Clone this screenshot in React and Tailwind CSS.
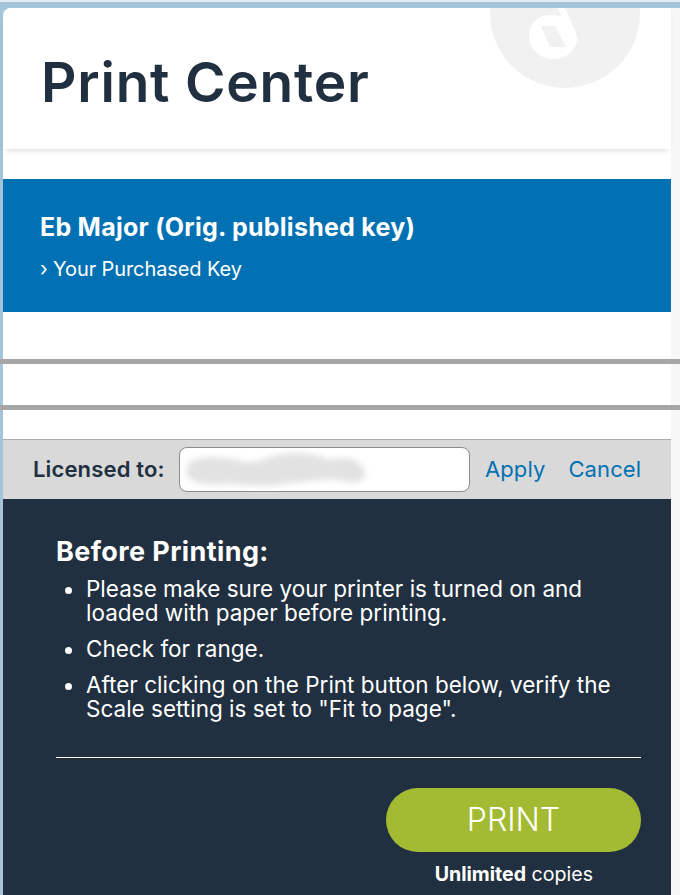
import React from 'react';

const NoteLogo = () => (
    <div className="absolute left-[487px] top-[-70px] w-[150px] h-[150px] rounded-full bg-[#f1f1f1]">
        <svg viewBox="0 0 150 150" className="w-full h-full">
            <path fillRule="evenodd" fill="#ffffff" d="M68 70 L75 70 L86 95 C88 101 87 107 83 112 C78 118 71 121 63 121 C50 121 39 111 39 98 C39 86 48 77 60 77 C64 77 67 77 71 78 Z M51 88 L65 88 L76 109 L60 109 Z" />
        </svg>
    </div>
);

const BlurredName = () => (
    <svg viewBox="0 0 190 45" className="absolute left-[3px] top-0 w-[190px] h-[45px]">
        <defs>
            <filter id="smear" x="-10%" y="-30%" width="120%" height="160%">
                <feGaussianBlur stdDeviation="3" />
            </filter>
        </defs>
        <path filter="url(#smear)" fill="#e2e2e2" d="M5 14 C20 8 40 8 58 13 C72 17 84 9 100 6 C118 3 135 7 148 12 C162 6 178 12 182 23 C183 34 172 37 158 32 C140 30 120 34 100 36 C80 40 60 36 45 36 C25 38 6 35 4 26 Z" />
    </svg>
);

const tips = [
    'Please make sure your printer is turned on and loaded with paper before printing.',
    'Check for range.',
    'After clicking on the Print button below, verify the Scale setting is set to "Fit to page".',
];

export default function App() {
    return (
        <div className="h-[895px] overflow-hidden bg-[#f7f7f7] font-['Inter',sans-serif]">
            <div className="h-[2px] bg-[#e4edf3]"></div>
            <div className="h-[6px] bg-[#a3c4d9]"></div>
            <div className="bg-[#a3c4d9] pl-[3px] w-[671px]">
                <div className="bg-white rounded-tl-lg">
                    {/* Header */}
                    <div className="relative z-10 h-[141px] overflow-hidden rounded-tl-lg bg-white shadow-[0_4px_6px_-3px_rgba(0,0,0,0.16)]">
                        <NoteLogo />
                        <h1 className="relative pl-[38px] pt-[36px] text-[55px] leading-[76px] font-semibold tracking-[0.8px] text-[#213040]">Print Center</h1>
                    </div>
                    <div className="h-[30px] bg-white"></div>

                    {/* Key */}
                    <div className="h-[133px] bg-[#0271b3] pl-[37px] pt-[31px] text-white">
                        <div className="text-[25px] leading-[34px] font-bold tracking-[0.25px]">Eb Major (Orig. published key)</div>
                        <div className="mt-[13px] text-[20px] leading-[24px] tracking-[-0.1px]">› Your Purchased Key</div>
                    </div>

                    {/* Ruled area */}
                    <div className="h-[127px] bg-white pt-[47px]">
                        <div className="ml-[-3px] mr-[-9px] h-[5px] bg-[#a6a6a6]"></div>
                        <div className="ml-[-3px] mr-[-9px] mt-[41px] h-[5px] bg-[#a6a6a6]"></div>
                    </div>

                    {/* License bar */}
                    <div className="flex h-[60px] items-center border-t border-[#aaaaaa] bg-[#d9d9d9] pl-[30px] text-[#213040]">
                        <span className="w-[146px] text-[22px] font-semibold tracking-[0.15px]">Licensed to:</span>
                        <div className="relative h-[45px] w-[291px] rounded-lg border border-[#8c8c8c] bg-white">
                            <BlurredName />
                        </div>
                        <a className="ml-[15px] text-[22px] tracking-[0.1px] text-[#0271b3]">Apply</a>
                        <a className="ml-[23px] text-[22px] tracking-[0.1px] text-[#0271b3]">Cancel</a>
                    </div>

                    {/* Before printing */}
                    <div className="h-[396px] bg-[#213040] pl-[53px] pr-[30px] pt-[36px] text-white">
                        <h2 className="text-[27px] leading-[34px] font-bold tracking-[0.4px]">Before Printing:</h2>
                        <ul className="mt-[8px] list-disc pl-[30px] pr-[15px] text-[22.5px] leading-[24px]">
                            {tips.map(tip => (
                                <li key={tip} className="mb-[12px]">{tip}</li>
                            ))}
                        </ul>
                        <div className="mt-[36px] h-px bg-white"></div>
                        <div className="mt-[30px] flex flex-col items-end">
                            <button className="h-[64px] w-[255px] rounded-full bg-[#a3bb33] text-[32px] font-light text-white">PRINT</button>
                            <div className="mt-[10px] mr-[48px] text-[19.6px] leading-[24px]"><span className="font-bold">Unlimited</span> copies</div>
                        </div>
                    </div>
                </div>
            </div>
        </div>
    );
}
